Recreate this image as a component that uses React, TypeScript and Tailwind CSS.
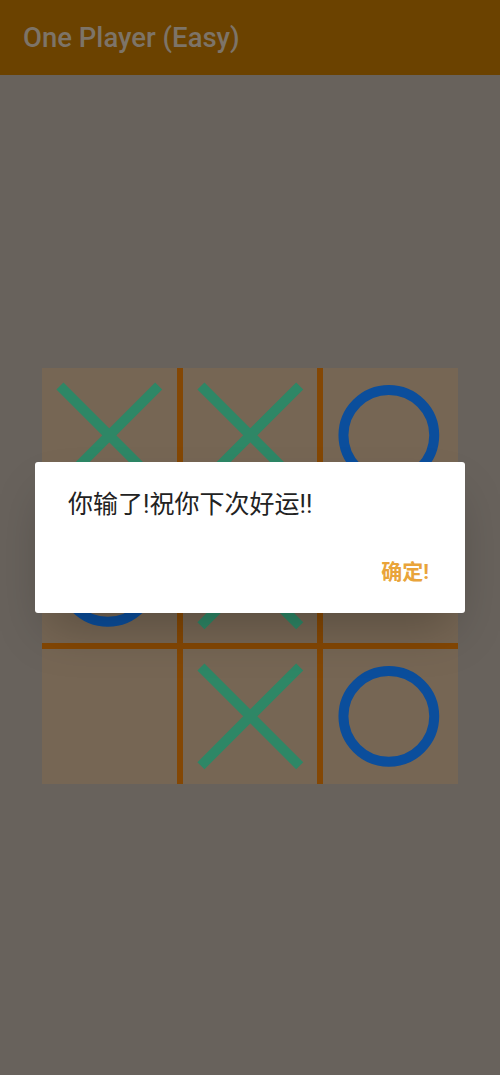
import React from 'react';

type Mark = 'X' | 'O' | null;

const BOARD: Mark[] = ['X', 'X', 'O', 'O', 'X', null, null, 'X', 'O'];

function Cell({ mark }: { mark: Mark }) {
  return (
    <div className="aspect-square bg-[#766654]">
      {mark === 'X' && (
        <svg viewBox="0 0 135 135" className="h-full w-full">
          <path d="M18 18 L117 117 M117 18 L18 117" stroke="#2e8766" strokeWidth={10} />
        </svg>
      )}
      {mark === 'O' && (
        <svg viewBox="0 0 135 135" className="h-full w-full">
          <circle cx="66" cy="67.5" r="45.5" fill="none" stroke="#0b4e9c" strokeWidth={10} />
        </svg>
      )}
    </div>
  );
}

export default function App() {
  return (
    <div
      className="relative h-[1075px] w-[500px] overflow-hidden bg-[#68625c]"
      style={{ fontFamily: 'Roboto, "Noto Sans CJK SC", sans-serif' }}
    >
      {/* App bar */}
      <div className="flex h-[75px] items-center bg-[#6b4200] px-[23px]">
        <span className="text-[27.5px] font-medium text-[#7d7468]">One Player (Easy)</span>
      </div>

      {/* Board */}
      <div className="mx-auto mt-[293px] grid w-[416px] grid-cols-3 gap-[6px] bg-[#844704]">
        {BOARD.map((m, i) => (
          <Cell key={i} mark={m} />
        ))}
      </div>

      {/* Dialog */}
      <div className="absolute inset-0 flex items-center justify-center">
        <div className="w-[430px] rounded-[3px] bg-white shadow-2xl">
          <p className="px-[33px] pt-[27px] text-[25px] leading-[32px] text-[#222222]">
            你输了!祝你下次好运!!
          </p>
          <div className="flex justify-end px-[36px] pb-[29px] pt-[39px]">
            <button className="text-[21px] font-bold leading-[24px] text-[#e9a43a]">确定!</button>
          </div>
        </div>
      </div>
    </div>
  );
}
